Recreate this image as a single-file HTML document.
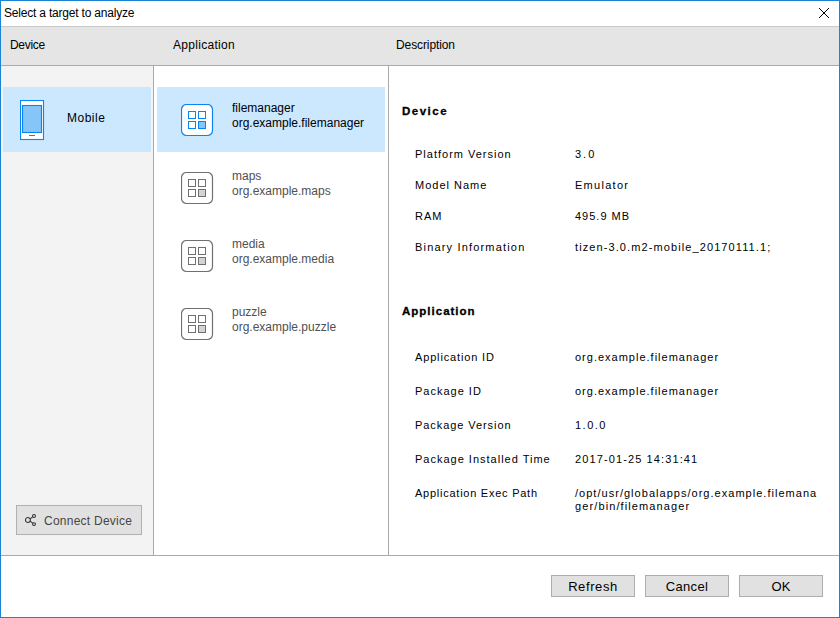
<!DOCTYPE html>
<html><head><meta charset="utf-8">
<style>
html,body{margin:0;padding:0;}
body{width:840px;height:618px;position:relative;overflow:hidden;background:#fff;font-family:"Liberation Sans",sans-serif;color:#000;}
.a{position:absolute;}
.t{position:absolute;white-space:pre;line-height:16px;}
.s12{font-size:12px;}
.s13{font-size:13px;}
.desc{font-size:11px;letter-spacing:0.85px;color:#000;}
.btn{position:absolute;box-sizing:border-box;border:1px solid #adadad;background:#e1e1e1;}
</style></head>
<body>
<!-- window border -->
<div class="a" style="left:0;top:0;width:838px;height:616px;border:1px solid #1883d7;"></div>
<!-- title bar -->
<div class="t s12" style="left:4px;top:5px;letter-spacing:-0.2px;">Select a target to analyze</div>
<svg class="a" style="left:818px;top:7px" width="13" height="13" viewBox="0 0 13 13"><path d="M1 1L11 11M11 1L1 11" stroke="#000" stroke-width="1" fill="none"/></svg>
<div class="a" style="left:1px;top:26px;width:838px;height:1px;background:#c9c9c9;"></div>
<!-- header -->
<div class="a" style="left:1px;top:27px;width:838px;height:38px;background:#e5e5e5;"></div>
<div class="a" style="left:1px;top:65px;width:838px;height:1px;background:#aaaaaa;"></div>
<div class="t s12" style="left:10px;top:37px;letter-spacing:-0.3px;">Device</div>
<div class="t s12" style="left:173px;top:37px;letter-spacing:0.3px;">Application</div>
<div class="t s12" style="left:396px;top:37px;letter-spacing:-0.1px;">Description</div>
<!-- left panel -->
<div class="a" style="left:1px;top:66px;width:152px;height:489px;background:#f3f3f3;"></div>
<div class="a" style="left:153px;top:66px;width:1px;height:489px;background:#aaaaaa;"></div>
<div class="a" style="left:388px;top:66px;width:1px;height:489px;background:#aaaaaa;"></div>
<div class="a" style="left:1px;top:555px;width:838px;height:1px;background:#aaaaaa;"></div>

<div class="a" style="left:3px;top:87px;width:148px;height:65px;background:#cce8ff;"></div>
<svg class="a" style="left:20px;top:100px" width="25" height="41" viewBox="0 0 25 41">
<rect x="0.5" y="0.5" width="23" height="39" fill="#fff" stroke="#0a84f0" stroke-width="1.1"/>
<rect x="2.5" y="5.5" width="19" height="27" fill="#86c5f7" stroke="#0a84f0" stroke-width="1.1"/>
<rect x="9" y="35" width="6" height="1" fill="#0a84f0"/>
</svg>
<div class="t s12" style="left:67px;top:110px;letter-spacing:0.5px;">Mobile</div>

<!-- connect device -->
<div class="btn" style="left:16px;top:505px;width:126px;height:30px;border-color:#b0b0b0;"></div>
<svg class="a" style="left:23px;top:513px" width="15" height="15" viewBox="0 0 15 15">
<g fill="none" stroke="#2e2e2e" stroke-width="1.05">
<circle cx="4.9" cy="7" r="2.45"/><circle cx="11" cy="3" r="1.45"/><circle cx="11" cy="11.1" r="1.45"/>
<path d="M7.1 5.8L9.7 3.9M7.1 8.2L9.7 10.1"/>
</g></svg>
<div class="t" style="left:44px;top:513px;font-size:12px;letter-spacing:0.25px;color:#454545;">Connect Device</div>

<!-- app list -->
<div class="a" style="left:157px;top:87px;width:228px;height:65px;background:#cce8ff;"></div>

<svg class="a" style="left:181px;top:104px" width="33" height="33" viewBox="0 0 33 33">
<rect x="0.5" y="0.5" width="31" height="31" rx="5" fill="#fff" stroke="#0a84f0" stroke-width="1.2"/>
<rect x="7.5" y="7.5" width="7" height="7" fill="none" stroke="#0a84f0"/>
<rect x="17.5" y="7.5" width="7" height="7" fill="none" stroke="#0a84f0"/>
<rect x="7.5" y="17.5" width="7" height="7" fill="none" stroke="#0a84f0"/>
<rect x="17.5" y="17.5" width="7" height="7" fill="#86c5f7" stroke="#0a84f0"/>
</svg>
<div class="t s12" style="left:232px;top:100px;">filemanager</div>
<div class="t s12" style="left:232px;top:115px;">org.example.filemanager</div>

<svg class="a" style="left:181px;top:172px" width="33" height="33" viewBox="0 0 33 33">
<rect x="0.5" y="0.5" width="31" height="31" rx="5" fill="#fff" stroke="#707070" stroke-width="1.2"/>
<rect x="7.5" y="7.5" width="7" height="7" fill="none" stroke="#707070"/>
<rect x="17.5" y="7.5" width="7" height="7" fill="none" stroke="#707070"/>
<rect x="7.5" y="17.5" width="7" height="7" fill="none" stroke="#707070"/>
<rect x="17.5" y="17.5" width="7" height="7" fill="#d4d4d4" stroke="#707070"/>
</svg>
<div class="t s12" style="left:232px;top:168px;color:#505050;">maps</div>
<div class="t s12" style="left:232px;top:183px;color:#505050;">org.example.maps</div>

<svg class="a" style="left:181px;top:240px" width="33" height="33" viewBox="0 0 33 33">
<rect x="0.5" y="0.5" width="31" height="31" rx="5" fill="#fff" stroke="#707070" stroke-width="1.2"/>
<rect x="7.5" y="7.5" width="7" height="7" fill="none" stroke="#707070"/>
<rect x="17.5" y="7.5" width="7" height="7" fill="none" stroke="#707070"/>
<rect x="7.5" y="17.5" width="7" height="7" fill="none" stroke="#707070"/>
<rect x="17.5" y="17.5" width="7" height="7" fill="#d4d4d4" stroke="#707070"/>
</svg>
<div class="t s12" style="left:232px;top:236px;color:#505050;">media</div>
<div class="t s12" style="left:232px;top:251px;color:#505050;">org.example.media</div>

<svg class="a" style="left:181px;top:308px" width="33" height="33" viewBox="0 0 33 33">
<rect x="0.5" y="0.5" width="31" height="31" rx="5" fill="#fff" stroke="#707070" stroke-width="1.2"/>
<rect x="7.5" y="7.5" width="7" height="7" fill="none" stroke="#707070"/>
<rect x="17.5" y="7.5" width="7" height="7" fill="none" stroke="#707070"/>
<rect x="7.5" y="17.5" width="7" height="7" fill="none" stroke="#707070"/>
<rect x="17.5" y="17.5" width="7" height="7" fill="#d4d4d4" stroke="#707070"/>
</svg>
<div class="t s12" style="left:232px;top:304px;color:#505050;">puzzle</div>
<div class="t s12" style="left:232px;top:319px;color:#505050;">org.example.puzzle</div>

<!-- description -->
<div class="t desc" style="left:402px;top:103px;font-weight:bold;font-size:11.5px;-webkit-text-stroke:0.3px #000;letter-spacing:1.5px;">Device</div>
<div class="t desc" style="left:415px;top:146px;letter-spacing:1.0px;">Platform Version</div>
<div class="t desc" style="left:575px;top:146px;letter-spacing:2.0px;">3.0</div>
<div class="t desc" style="left:415px;top:177px;letter-spacing:1.0px;">Model Name</div>
<div class="t desc" style="left:575px;top:177px;letter-spacing:1.286px;">Emulator</div>
<div class="t desc" style="left:415px;top:208px;letter-spacing:1.0px;">RAM</div>
<div class="t desc" style="left:575px;top:208px;letter-spacing:1.0px;">495.9 MB</div>
<div class="t desc" style="left:415px;top:239px;letter-spacing:1.176px;">Binary Information</div>
<div class="t desc" style="left:575px;top:239px;letter-spacing:1.1px;">tizen-3.0.m2-mobile_20170111.1;</div>

<div class="t desc" style="left:402px;top:303px;font-weight:bold;font-size:11.5px;-webkit-text-stroke:0.3px #000;letter-spacing:1.0px;">Application</div>
<div class="t desc" style="left:415px;top:349px;letter-spacing:0.846px;">Application ID</div>
<div class="t desc" style="left:575px;top:349px;letter-spacing:1.0px;">org.example.filemanager</div>
<div class="t desc" style="left:415px;top:383px;letter-spacing:1.0px;">Package ID</div>
<div class="t desc" style="left:575px;top:383px;letter-spacing:1.0px;">org.example.filemanager</div>
<div class="t desc" style="left:415px;top:417px;letter-spacing:0.929px;">Package Version</div>
<div class="t desc" style="left:575px;top:417px;letter-spacing:1.5px;">1.0.0</div>
<div class="t desc" style="left:415px;top:451px;letter-spacing:1.0px;">Package Installed Time</div>
<div class="t desc" style="left:575px;top:451px;letter-spacing:1.111px;">2017-01-25 14:31:41</div>
<div class="t desc" style="left:415px;top:485px;letter-spacing:0.75px;">Application Exec Path</div>
<div class="t desc" style="left:575px;top:485px;letter-spacing:1.026px;">/opt/usr/globalapps/org.example.filemana</div>
<div class="t desc" style="left:575px;top:498px;letter-spacing:1.111px;">ger/bin/filemanager</div>

<!-- bottom buttons -->
<div class="btn" style="left:551px;top:575px;width:84px;height:22px;"></div>
<div class="t s13" style="left:551px;top:579px;width:84px;text-align:center;letter-spacing:0.6px;">Refresh</div>
<div class="btn" style="left:645px;top:575px;width:84px;height:22px;"></div>
<div class="t s13" style="left:645px;top:579px;width:84px;text-align:center;letter-spacing:0.35px;">Cancel</div>
<div class="btn" style="left:739px;top:575px;width:84px;height:22px;"></div>
<div class="t s13" style="left:739px;top:579px;width:84px;text-align:center;">OK</div>
</body></html>
